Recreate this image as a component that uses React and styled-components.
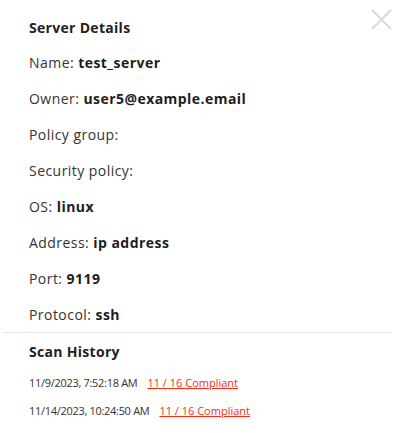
import React from "react";
import styled, { createGlobalStyle } from "styled-components";

const Global = createGlobalStyle`
  html, body { margin: 0; padding: 0; background: #fff; }
  body { font-family: "Open Sans", "Noto Sans", sans-serif; color: #222; }
`;

const Modal = styled.div`
  position: relative;
  width: 388px;
  margin-left: 4px;
  padding-top: 17px;
`;

const Close = styled.button`
  position: absolute;
  top: 9px;
  right: 0;
  width: 21px;
  height: 21px;
  padding: 0;
  border: none;
  background: transparent;
  cursor: pointer;
  display: block;
`;

const Section = styled.div`
  padding: 0 25px;
`;

const Title = styled.h3`
  margin: 0 0 13px;
  font-size: 14px;
  line-height: 22px;
  font-weight: 700;
  letter-spacing: 0.3px;
  color: #222;
`;

const Row = styled.p`
  margin: 0 0 14px;
  font-size: 14px;
  line-height: 22px;
  letter-spacing: 0.45px;
  color: #333;
  b { font-weight: 700; color: #1d1d1d; }
  &:last-child { margin-bottom: 6px; }
`;

const Divider = styled.hr`
  margin: 0;
  border: none;
  border-top: 1px solid #e2e2e2;
`;

const ScanSection = styled(Section)`
  padding-top: 8px;
`;

const ScanTitle = styled(Title)`
  margin-bottom: 6px;
`;

const ScanRow = styled.div`
  display: flex;
  gap: 10px;
  font-size: 11px;
  line-height: 28px;
  color: #333;
`;

const Stamp = styled.span`
  letter-spacing: -0.3px;
`;

const Link = styled.a`
  color: #ff2a12;
  text-decoration: underline;
`;

const rows = [
  ["Name:", "test_server"],
  ["Owner:", "user5@example.email"],
  ["Policy group:", ""],
  ["Security policy:", ""],
  ["OS:", "linux"],
  ["Address:", "ip address"],
  ["Port:", "9119"],
  ["Protocol:", "ssh"],
];

const scans = ["11/9/2023, 7:52:18 AM", "11/14/2023, 10:24:50 AM"];

export default function App() {
  return (
    <>
      <Global />
      <Modal>
        <Close aria-label="close">
          <svg width="21" height="21" viewBox="0 0 21 21">
            <path d="M1 1 L20 20 M20 1 L1 20" stroke="#d9d9d9" strokeWidth="2" fill="none" />
          </svg>
        </Close>
        <Section>
          <Title>Server Details</Title>
          {rows.map(([k, v]) => (
            <Row key={k}>
              {k} {v && <b>{v}</b>}
            </Row>
          ))}
        </Section>
        <Divider />
        <ScanSection>
          <ScanTitle>Scan History</ScanTitle>
          {scans.map((s) => (
            <ScanRow key={s}>
              <Stamp>{s}</Stamp>
              <Link href="#">11 / 16 Compliant</Link>
            </ScanRow>
          ))}
        </ScanSection>
      </Modal>
    </>
  );
}
